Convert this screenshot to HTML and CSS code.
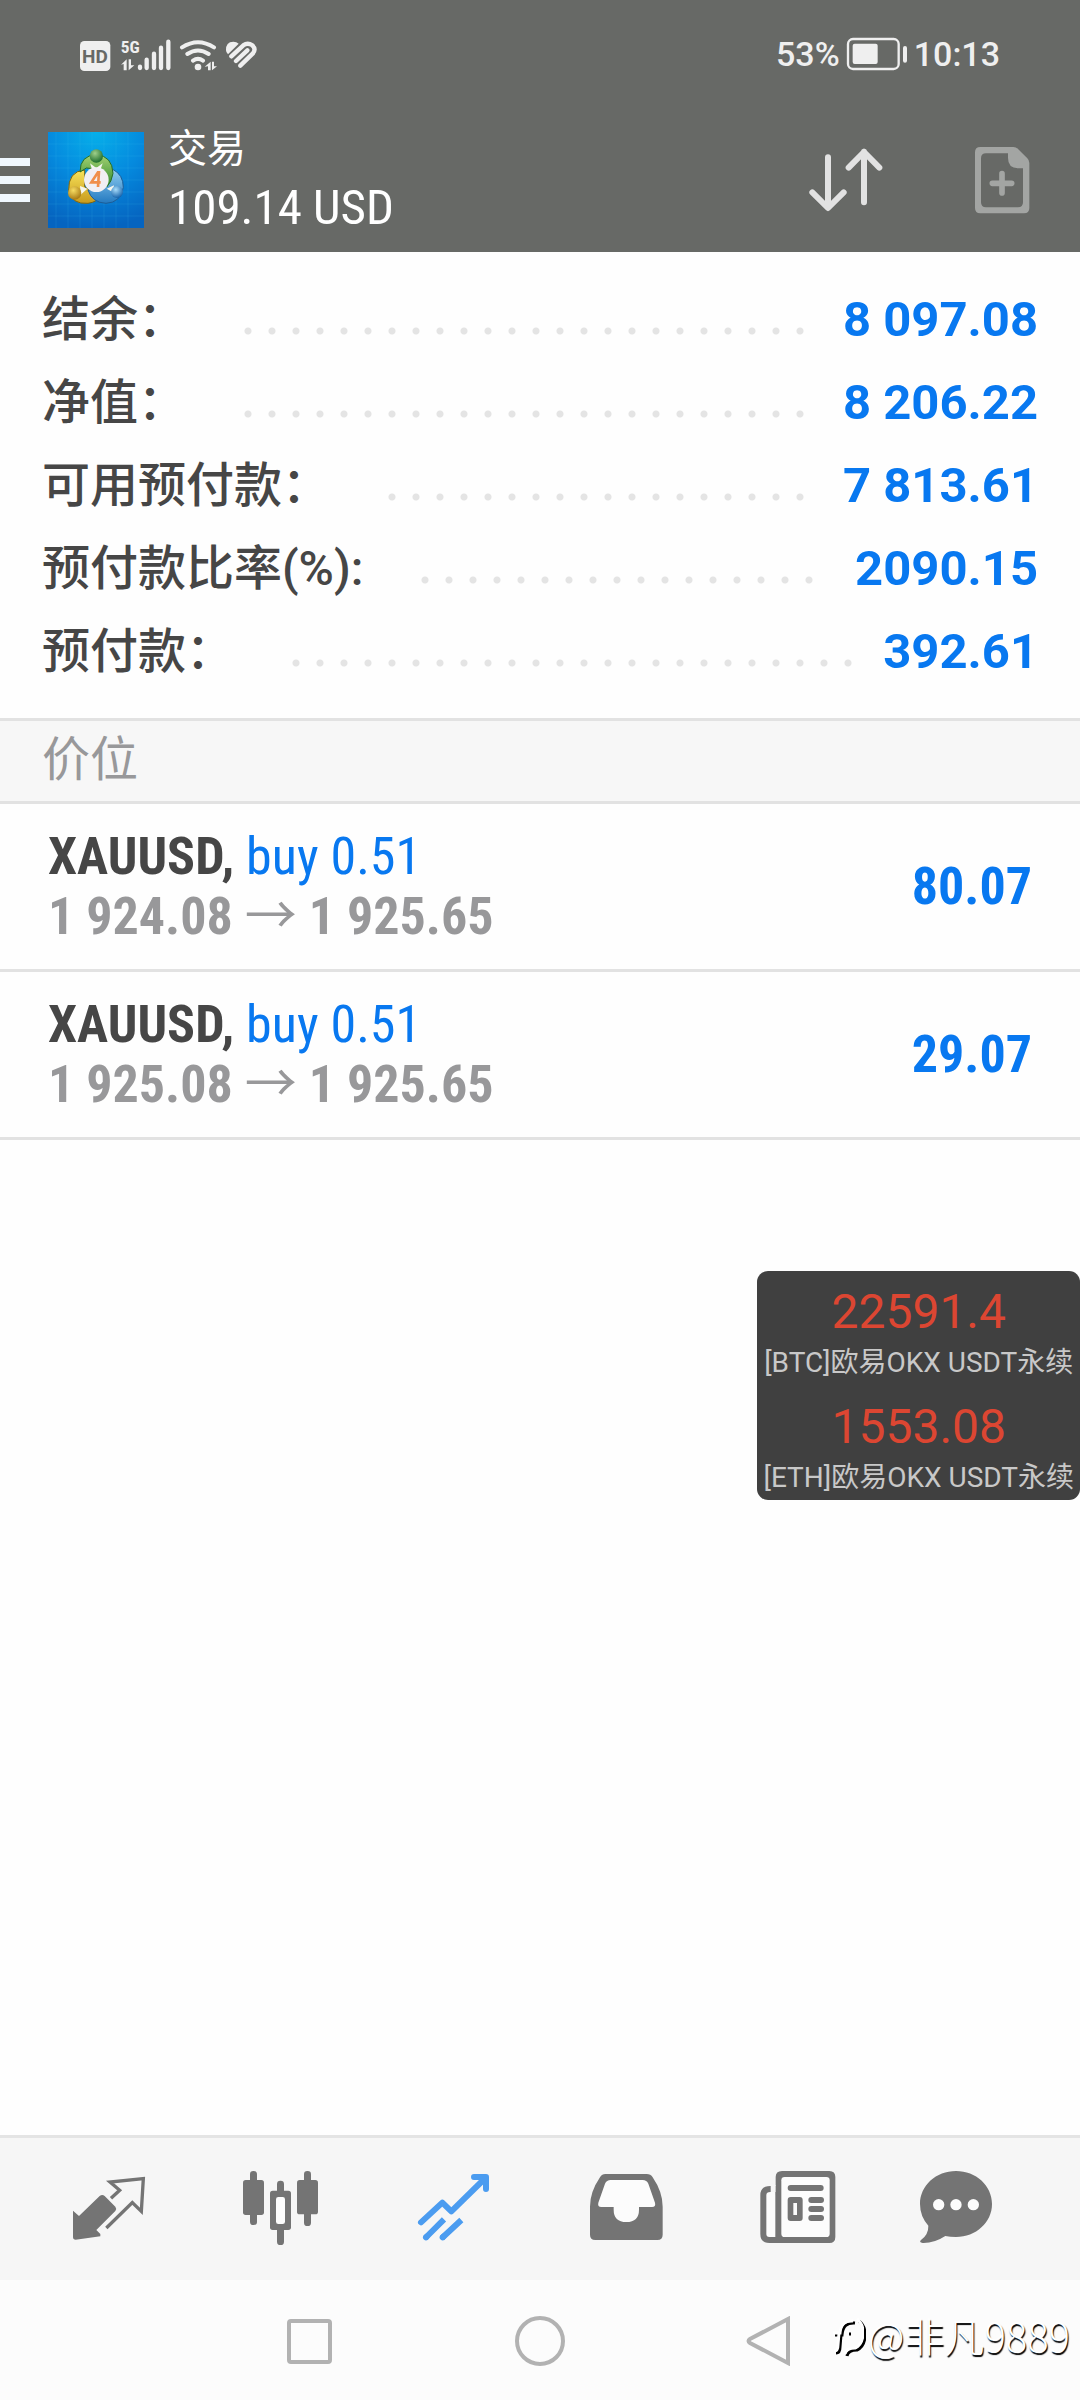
FILE: index.html
```html
<!DOCTYPE html>
<html lang="zh-CN">
<head>
<meta charset="utf-8">
<meta name="viewport" content="width=device-width, initial-scale=1">
<title>交易</title>
<link rel="stylesheet" href="styles.css">
</head>
<body>
<header class="top">
  <div class="status">
    <svg class="status-icons" viewBox="54 45 546 108" aria-hidden="true">
      <rect x="60" y="60" width="91" height="90" rx="13" fill="#efefef"/>
      <text class="hd" x="105" y="125" text-anchor="middle">HD</text>
      <text class="fiveg" x="182" y="96">5G</text>
      <path fill="#efefef" d="M183 131l17-16v33h-9v-19zM206 115h7v18h10l-17 15z"/>
      <g stroke="#efefef" stroke-linecap="round" stroke-width="13">
        <path d="M240 137v4M260 116v25M282 98v43M303 80v61M325 62v79"/>
      </g>
      <g fill="none" stroke="#efefef" stroke-linecap="round" stroke-width="12">
        <path d="M366 79Q414 48 462 79M382 99Q414 78 446 99M399 119Q414 108 429 119"/>
      </g>
      <circle cx="414" cy="138" r="10" fill="#efefef"/>
      <path fill="#efefef" d="M434 137l18-15v26h-8v-12zM456 122h6v14h9l-15 12z"/>
      <path fill="#efefef" d="M498 88q-1-26 22-26q10 0 16 6l-32 32q-6-5-6-12z"/>
      <g fill="none" stroke="#efefef" stroke-linecap="round" stroke-linejoin="round" stroke-width="13">
        <path d="M514 106L550 73Q563 63 577 73Q590 85 578 98L541 134M528 120L562 88"/>
      </g>
    </svg>
    <div class="status-right">
      <span>53%</span>
      <svg class="battery" viewBox="315 52 186 102" aria-hidden="true">
        <rect x="321" y="58" width="152" height="90" rx="15" fill="none" stroke="#efefef" stroke-width="7"/>
        <rect x="335" y="72" width="75" height="61" rx="6" fill="#efefef"/>
        <rect x="486" y="79" width="12" height="50" rx="6" fill="#efefef"/>
      </svg>
      <span>10:13</span>
    </div>
  </div>
  <div class="appbar">
    <button class="menu" aria-label="菜单"><i></i><i></i><i></i></button>
    <svg class="logo" viewBox="144 66 288 288" aria-hidden="true">
      <defs>
        <radialGradient id="bg" cx=".5" cy="0" r="1"><stop offset="0" stop-color="#06b0ea"/><stop offset=".5" stop-color="#058ade"/><stop offset="1" stop-color="#0564c0"/></radialGradient>
        <linearGradient id="gr" x1="0" y1="0" x2="0" y2="1"><stop offset="0" stop-color="#a5d273"/><stop offset="1" stop-color="#2f8a2c"/></linearGradient>
        <linearGradient id="ye" x1="0" y1="0" x2="0" y2="1"><stop offset="0" stop-color="#f7e25a"/><stop offset="1" stop-color="#c89a1c"/></linearGradient>
        <linearGradient id="bl" x1="0" y1="0" x2="0" y2="1"><stop offset="0" stop-color="#8fcdf0"/><stop offset="1" stop-color="#2379c0"/></linearGradient>
        <radialGradient id="g1" cx=".4" cy=".3" r=".7"><stop offset="0" stop-color="#9fd08a"/><stop offset="1" stop-color="#1f6e2c"/></radialGradient>
        <radialGradient id="y1" cx=".4" cy=".3" r=".7"><stop offset="0" stop-color="#f6dc62"/><stop offset="1" stop-color="#a87a14"/></radialGradient>
        <radialGradient id="b1" cx=".4" cy=".3" r=".7"><stop offset="0" stop-color="#a8dcfa"/><stop offset="1" stop-color="#1764ac"/></radialGradient>
      </defs>
      <rect x="144" y="66" width="288" height="288" fill="url(#bg)"/>
      <path d="M168 66v288M204 66v288M240 66v288M276 66v288M312 66v288M348 66v288M384 66v288M144 102h288M144 138h288M144 174h288M144 210h288M144 246h288M144 282h288M144 318h288" stroke="#4cc0f2" stroke-opacity=".22" stroke-width="2"/>
      <path d="M254 180q-50 4-48 62q10 42 58 38q28-4 34-20l-44-30z" fill="url(#ye)" stroke="#7d6410" stroke-width="3"/>
      <path d="M338 178q32 16 32 54q-8 46-52 48q-42-2-54-40l50-4z" fill="url(#bl)" stroke="#1d5d96" stroke-width="3"/>
      <path d="M240 186q0-50 49-52q48 4 50 56q-4 26-18 40l-22-52l-40-4z" fill="url(#gr)" stroke="#256d25" stroke-width="3"/>
      <path d="M270 160l19 14l19-14l-8 24h-22zM240 228l22 8l-20 18zM320 236l22-10l-4 20z" fill="#f4f6ee"/>
      <circle cx="289" cy="138" r="20" fill="url(#g1)"/>
      <circle cx="224" cy="249" r="20" fill="url(#y1)"/>
      <circle cx="351" cy="246" r="18" fill="url(#b1)"/>
      <circle cx="289" cy="209" r="37" fill="#f1eff3"/>
      <path d="M297 183l-3 48M295 185l-21 32h28" fill="none" stroke="#f08e4a" stroke-width="8"/>
    </svg>
    <div class="heading">
      <h1>交易</h1>
      <p class="condensed">109.14 USD</p>
    </div>
    <button class="tool sort" aria-label="排序">
      <svg viewBox="84 77 228 204" fill="none" stroke="#e2e2e2" stroke-width="18" stroke-linecap="round" stroke-linejoin="round"><path d="M144 111v150M97 216l47 47l47-47M252 246V94M206 142l46-47l46 47"/></svg>
    </button>
    <button class="tool add" aria-label="新订单">
      <svg viewBox="582 77 168 204"><path fill="#a3a5a3" fill-rule="evenodd" d="M601 80h99q8 0 14 6l28 28q6 6 6 14v135q0 16-16 16H601q-16 0-16-16V96q0-16 16-16zM618 99q-15 0-15 15v132q0 15 15 15h96q15 0 15-15V144h-14q-31 0-31-31V99z"/><path d="M666 160v58M637 189h58" stroke="#a3a5a3" stroke-width="17" stroke-linecap="round"/></svg>
    </button>
  </div>
</header>

<main class="content">
  <dl class="summary">
    <div class="line"><dt>结余：</dt><dd>8 097.08</dd></div>
    <div class="line"><dt>净值：</dt><dd>8 206.22</dd></div>
    <div class="line"><dt>可用预付款：</dt><dd>7 813.61</dd></div>
    <div class="line"><dt>预付款比率(%):</dt><dd>2090.15</dd></div>
    <div class="line"><dt>预付款：</dt><dd>392.61</dd></div>
  </dl>
  <h2 class="section">价位</h2>
  <ul class="positions condensed">
    <li class="position">
      <div>
        <p class="deal"><b>XAUUSD,</b> <span>buy 0.51</span></p>
        <p class="prices">1 924.08 <span class="arrow">→</span> 1 925.65</p>
      </div>
      <strong class="profit">80.07</strong>
    </li>
    <li class="position">
      <div>
        <p class="deal"><b>XAUUSD,</b> <span>buy 0.51</span></p>
        <p class="prices">1 925.08 <span class="arrow">→</span> 1 925.65</p>
      </div>
      <strong class="profit">29.07</strong>
    </li>
  </ul>
</main>

<aside class="ticker">
  <div class="quote"><p class="quote-price">22591.4</p><p class="quote-name">[BTC]欧易OKX USDT永续</p></div>
  <div class="quote"><p class="quote-price">1553.08</p><p class="quote-name">[ETH]欧易OKX USDT永续</p></div>
</aside>

<nav class="tabs">
  <button aria-label="行情"><svg viewBox="84 141 252 252">
    <path fill="#747474" d="M102 272l18 16l62-60q8-6 15 0l32 32q5 6 0 13l-57 57l12 12v7l-74 10q-8 0-8-8z"/>
    <path fill="none" stroke="#747474" stroke-width="10" d="M216 235l26-24l-29-25l100-10l-6 98l-27-26l-78 76"/></svg></button>
  <button aria-label="图表"><svg viewBox="600 141 252 252" fill="#747474">
    <rect x="633" y="153" width="21" height="162" rx="10"/><rect x="612" y="180" width="63" height="105" rx="8"/>
    <rect x="795" y="153" width="21" height="165" rx="10"/><rect x="774" y="180" width="63" height="103" rx="8"/>
    <rect x="714" y="182" width="21" height="193" rx="10"/><rect x="693" y="212" width="63" height="118" rx="8"/><rect x="711" y="231" width="27" height="81" rx="7" fill="#fcfcfc"/></svg></button>
  <button aria-label="交易" aria-current="page"><svg viewBox="1116 141 252 252" fill="none" stroke="#4b9cf0" stroke-width="18" stroke-linejoin="round">
    <path stroke-linecap="round" d="M1143 307l64-59l27 26l96-94M1302 171h36v36M1158 352l2-2M1208 352l2-2"/><path d="M1156 354l56-56M1206 354l58-54"/></svg></button>
  <button aria-label="历史"><svg viewBox="132 141 252 252">
    <path fill="#747474" d="M196 162h124q12 0 18 10q30 44 30 88v84q0 16-16 16H166q-16 0-16-16v-84q0-44 30-88q6-10 16-10z"/>
    <path fill="#fcfcfc" d="M212 180h96q12 0 17 11l20 57q3 13-9 13h-39v8q0 37-38 37t-38-37v-8h-37q-12 0-9-13l20-57q5-11 17-11z"/></svg></button>
  <button aria-label="新闻"><svg viewBox="654 141 252 252">
    <path fill="#747474" d="M732 153h142q18 0 18 18v180q0 18-18 18H694q-27 0-27-27V225q0-27 30-27h16v-27q0-18 19-18z"/>
    <path fill="#f7f7f7" d="M698 196h15v20h-15z"/><path fill="#fcfcfc" d="M697 216h15v135h-18q-9 0-9-9V225q0-9 12-9z"/><rect x="730" y="171" width="145" height="180" rx="10" fill="#fcfcfc"/>
    <g fill="#747474"><rect x="749" y="195" width="108" height="18" rx="9"/><rect x="749" y="231" width="45" height="72" rx="9"/><rect x="811" y="231" width="47" height="18" rx="9"/><rect x="811" y="258" width="47" height="18" rx="9"/><rect x="811" y="285" width="47" height="18" rx="9"/></g>
    <rect x="766" y="249" width="11" height="36" fill="#fcfcfc"/></svg></button>
  <button aria-label="消息"><svg viewBox="1128 141 252 252">
    <path fill="#747474" d="M1254 153c60 0 108 44 108 99s-48 99-108 99q-18 0-32-3q-34 22-68 21q-12-2-5-9q23-17 22-43q-25-28-25-65c0-55 48-99 108-99z"/>
    <g fill="#fcfcfc"><circle cx="1202" cy="254" r="17"/><circle cx="1254" cy="254" r="17"/><circle cx="1306" cy="254" r="17"/></g></svg></button>
</nav>

<footer class="system">
  <button aria-label="最近任务"><svg viewBox="0 0 50 50"><rect x="5" y="5" width="41" height="41" rx="2"/></svg></button>
  <button aria-label="主屏幕"><svg viewBox="0 0 50 50"><circle cx="25" cy="25" r="23"/></svg></button>
  <button aria-label="返回"><svg viewBox="0 0 50 50"><path d="M42 3v44L4 27q-3-2 0-4z"/></svg></button>
  <p class="watermark"><svg viewBox="0 0 34 44" aria-hidden="true"><path d="M4 38q4 0 4-6l1-12M3 20h7q1-13 13-12M17 19h2M27 6q7 6 6 16t-8 13q-9 0-10 6" fill="none" stroke="#fff" stroke-width="3"/></svg>@非凡9889</p>
</footer>
</body>
</html>
```

FILE: styles.css
```css
* {
  box-sizing: border-box;
}

body {
  position: relative;
  display: flex;
  flex-direction: column;
  min-height: 100vh;
  margin: 0;
  background: #fefefe;
  color: #464646;
  font-family: Roboto, "Noto Sans CJK SC", sans-serif;
}

h1, h2, p, dl, dd, ul {
  margin: 0;
  padding: 0;
}

button {
  display: flex;
  align-items: center;
  justify-content: center;
  padding: 0;
  border: 0;
  background: none;
}

svg {
  display: block;
}

.condensed {
  font-family: "Roboto Condensed", "Liberation Sans Narrow", Roboto, sans-serif;
}

/* Top area */
.top {
  background: #676966;
  color: #fff;
}

.status {
  display: flex;
  align-items: center;
  justify-content: space-between;
  height: 108px;
  padding: 0 80px 0 78px;
  color: #efefef;
  font-size: 34px;
  font-weight: 500;
}

.status-icons {
  width: 182px;
  height: 36px;
}

.hd {
  fill: #676966;
  font-size: 57px;
  font-weight: 700;
}

.fiveg {
  fill: #efefef;
  font-size: 52px;
  font-weight: 700;
  font-family: "Roboto Condensed", "Liberation Sans Narrow", sans-serif;
}

.status-right {
  display: flex;
  align-items: center;
  gap: 6px;
}

.battery {
  width: 62px;
  height: 34px;
}

.appbar {
  display: flex;
  align-items: center;
  height: 144px;
  padding-right: 50px;
}

.menu {
  flex-direction: column;
  align-items: stretch;
  gap: 10px;
  width: 30px;
  margin-right: 18px;
}

.menu i {
  height: 8px;
  background: #f0f8ff;
}

.logo {
  width: 96px;
  height: 96px;
  margin-right: 24px;
}

.heading {
  flex: 1;
}

.heading h1 {
  font-size: 39px;
  font-weight: 400;
  line-height: 56px;
}

.heading p {
  font-size: 49px;
  line-height: 62px;
}

.sort svg {
  width: 76px;
  height: 68px;
}

.add {
  margin-left: 90px;
}

.add svg {
  width: 56px;
  height: 68px;
}

/* Account summary */
.content {
  flex: 1;
}

.summary {
  padding: 26px 42px 25px;
  border-bottom: 3px solid #e2e2e2;
}

.line {
  display: flex;
  font-size: 48px;
  line-height: 83px;
}

.line dt {
  font-weight: 500;
}

.line::before {
  order: 1;
  flex: 1;
  margin: 0 27px 0 42px;
  background: radial-gradient(circle at 20px 53px, #e4e4e4 3px, transparent 4px) 0 0 / 24px 83px repeat-x;
  content: "";
}

.line dd {
  order: 2;
  color: #0878f0;
  font-size: 49px;
  font-weight: 700;
}

.section {
  padding: 0 42px 3px;
  border-bottom: 3px solid #e2e2e2;
  background: #f7f7f7;
  color: #98989a;
  font-size: 48px;
  font-weight: 400;
  line-height: 77px;
}

/* Open positions */
.positions {
  list-style: none;
  font-size: 52px;
  line-height: 60px;
}

.position {
  display: flex;
  align-items: center;
  justify-content: space-between;
  height: 168px;
  padding: 0 48px;
  border-bottom: 3px solid #e2e2e2;
}

.deal span {
  color: #0878f0;
}

.prices {
  color: #98989a;
  font-weight: 700;
}

.arrow {
  font-family: "Noto Sans CJK SC", sans-serif;
  font-weight: 400;
  line-height: 0;
}

.profit {
  color: #0878f0;
}

/* Floating quotes */
.ticker {
  position: absolute;
  top: 1271px;
  right: 0;
  display: grid;
  gap: 13px;
  padding: 8px 6px 4px;
  border-radius: 11px;
  background: #404040;
  text-align: center;
  white-space: nowrap;
}

.quote-price {
  color: #dc4632;
  font-size: 48px;
  line-height: 66px;
}

.quote-name {
  color: #c8c8c8;
  font-size: 28px;
  line-height: 36px;
}

/* Bottom tabs */
.tabs {
  display: grid;
  grid-template-columns: repeat(5, 6fr) 5fr;
  align-items: center;
  height: 145px;
  padding: 0 52px 0 23px;
  border-top: 3px solid #e4e4e4;
  background: #f6f6f6;
}

.tabs svg {
  width: 84px;
  height: 84px;
}

/* System navigation */
.system {
  position: relative;
  display: grid;
  grid-template-columns: repeat(3, 1fr);
  align-items: center;
  height: 120px;
  padding: 2px 194px 0;
  background: #fcfcfc;
}

.system button svg {
  width: 50px;
  height: 50px;
  fill: none;
  stroke: #b2b2b2;
  stroke-width: 4px;
}

.watermark {
  position: absolute;
  right: 10px;
  bottom: 35px;
  display: flex;
  align-items: center;
  gap: 4px;
  color: #fff;
  font-family: "Noto Sans CJK SC", sans-serif;
  font-size: 40px;
  font-weight: 300;
  line-height: 60px;
  text-shadow: 1px 2px 1px #000;
}

.watermark svg {
  width: 34px;
  height: 44px;
  filter: drop-shadow(2px 2px 0 #000);
}
```
